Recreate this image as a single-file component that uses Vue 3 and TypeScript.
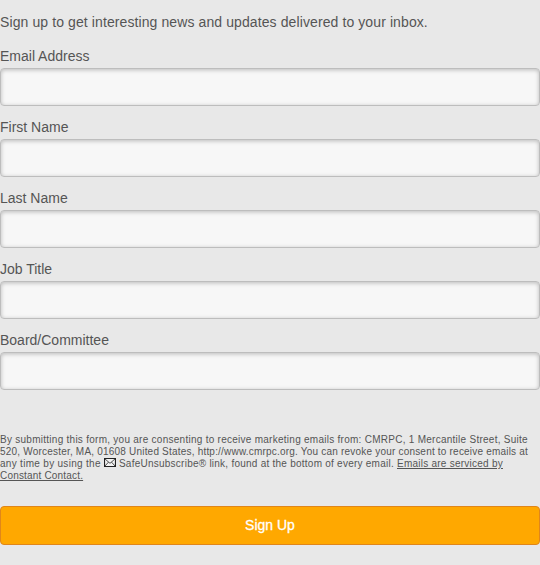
<script setup lang="ts">
interface Field { id: string; label: string; type: string }
const fields: Field[] = [
  { id: 'email', label: 'Email Address', type: 'email' },
  { id: 'first-name', label: 'First Name', type: 'text' },
  { id: 'last-name', label: 'Last Name', type: 'text' },
  { id: 'job-title', label: 'Job Title', type: 'text' },
  { id: 'board', label: 'Board/Committee', type: 'text' },
]
</script>

<template>
  <form class="signup" @submit.prevent>
    <p class="intro">Sign up to get interesting news and updates delivered to your inbox.</p>
    <div v-for="field in fields" :key="field.id" class="field">
      <label :for="field.id">{{ field.label }}</label>
      <input :id="field.id" :type="field.type" />
    </div>
    <p class="disclosure">
      By submitting this form, you are consenting to receive marketing emails from: CMRPC, 1 Mercantile Street, Suite<br />
      <span class="address">520, Worcester, MA, 01608 United States, http://www.cmrpc.org. You can revoke your consent to receive emails at</span><br />
      <span class="lead">any time by using the </span>
      <svg class="envelope" viewBox="0 0 12 9" width="12" height="9" aria-hidden="true">
        <path class="sheet" d="M.5.5h11v8H.5z" />
        <path class="fold" d="M.7.7L6 5.3 11.3.7M.8 8.2l3.6-4M11.2 8.2l-3.6-4" />
      </svg>
      <span class="service">
        SafeUnsubscribe® link, found at the bottom of every email. <a href="#">Emails are serviced by<br /><span class="provider">Constant Contact.</span></a>
      </span>
    </p>
    <button type="submit">Sign Up</button>
  </form>
</template>

<style>
body { background: #e8e8e8; }
</style>

<style scoped>
.signup {
  box-sizing: border-box;
  height: 565px;
  padding-top: 14px;
  background: #e8e8e8;
  color: #555;
  font-family: "Liberation Sans", Arial, sans-serif;
  font-size: 14px;
  line-height: 16px;
}
.intro { margin: 0 0 18px; letter-spacing: 0.1px; }
.field { margin-bottom: 13px; }
label { display: block; margin-bottom: 4px; }
input {
  display: block;
  box-sizing: border-box;
  width: 100%;
  height: 38px;
  margin: 0;
  padding: 0 10px;
  border: 1px solid #bdbdbd;
  border-radius: 4px;
  background: #f7f7f7;
  box-shadow: inset 0 1px 4px rgba(0, 0, 0, 0.25);
  font: inherit;
}
.disclosure {
  margin: 44px 0 24px;
  font-size: 10px;
  line-height: 12px;
  letter-spacing: 0.265px;
  white-space: nowrap;
}
.address { letter-spacing: 0.202px; }
.lead { letter-spacing: 0.3px; }
.service { letter-spacing: 0.245px; }
.provider { letter-spacing: 0.18px; }
.disclosure a { color: inherit; }
.envelope { fill: none; stroke: #222; }
.sheet { fill: #f4f4f4; stroke-width: 1.2; }
.fold { stroke-width: 0.8; }
button {
  display: block;
  box-sizing: border-box;
  width: 100%;
  height: 39px;
  padding: 0 0 2px;
  border: 1px solid #e0861a;
  border-radius: 4px;
  background: #ffa800;
  color: #fff;
  font: inherit;
  -webkit-text-stroke: 0.3px #fff;
}
</style>
